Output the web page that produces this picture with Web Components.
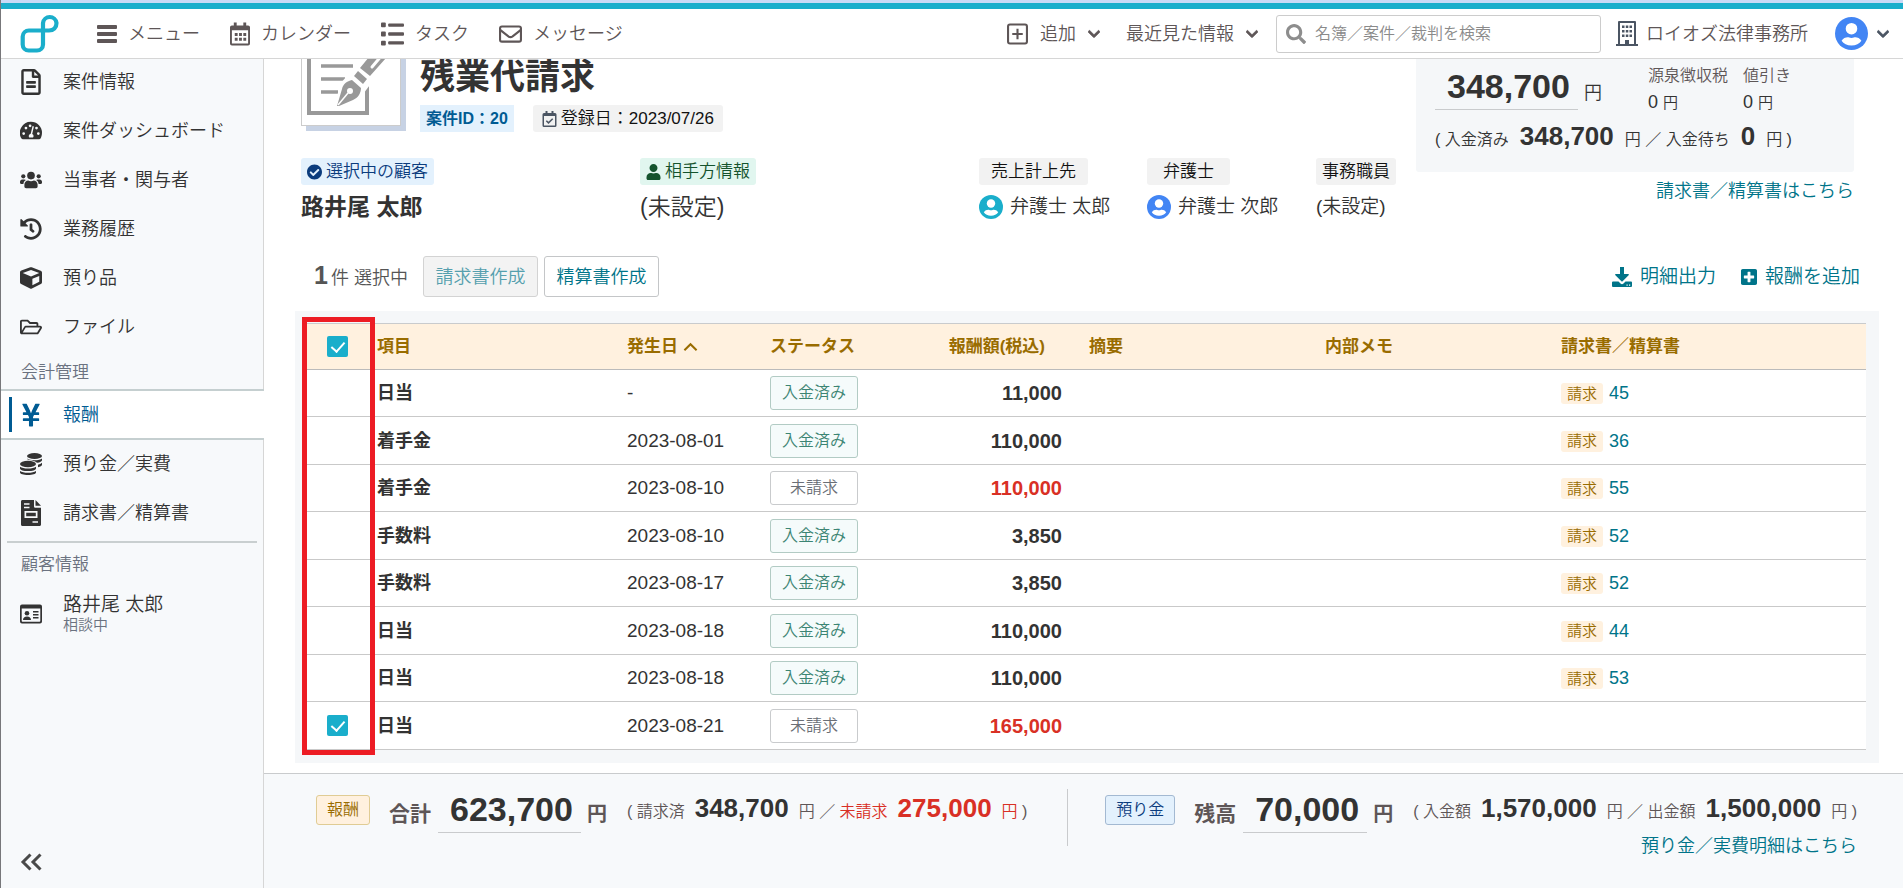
<!DOCTYPE html>
<html lang="ja">
<head>
<meta charset="utf-8">
<title>報酬 - 残業代請求</title>
<style>
:root {
  --teal: #1aaecb; --link: #007489; --ink: #333; --soft: #5e5657; --muted: #6b7280;
  --line: #c9cbcd; --panel: #f7f9fb; --amber: #996c00; --amber-bg: #fff1df; --red: #d93025;
}
body { margin: 0; color: var(--ink); font: 350 18px/24px "Liberation Sans", "Noto Sans CJK JP", sans-serif; }
</style>
</head>
<body>
<app-shell></app-shell>
<script>
const ICONS = {
  bars: ['0 0 20 20', '<rect y="1" width="20" height="4" rx="1"/><rect y="8" width="20" height="4" rx="1"/><rect y="15" width="20" height="4" rx="1"/>'],
  calendar: ['0 0 21 24', '<path fill-rule="evenodd" d="M4 0h3v3h7V0h3v3h2a2 2 0 0 1 2 2v17a2 2 0 0 1-2 2H2a2 2 0 0 1-2-2V5a2 2 0 0 1 2-2h2zM2 8v14h17V8z"/><path d="M5 11h3v3H5zm4.500 0h3v3h-3zm4.500 0h3v3h-3zM5 16h3v3H5zm4.500 0h3v3h-3zm4.500 0h3v3h-3z"/>'],
  list: ['0 0 24 24', '<rect width="5" height="5" rx="1"/><rect y="9.500" width="5" height="5" rx="1"/><rect y="19" width="5" height="5" rx="1"/><rect x="7.500" y="1" width="16.500" height="3.500" rx="1"/><rect x="7.500" y="10.200" width="16.500" height="3.500" rx="1"/><rect x="7.500" y="19.500" width="16.500" height="3.500" rx="1"/>'],
  mail: ['0 0 24 18', '<g fill="none" stroke="currentColor" stroke-width="2.200"><rect x="1.100" y="1.100" width="21.800" height="15.800" rx="2"/><path d="M1.500 5l8.300 6.500q2.200 1.600 4.400 0L22.500 5"/></g>'],
  plusbox: ['0 0 22 22', '<g fill="none" stroke="currentColor" stroke-width="2.200"><rect x="1.100" y="1.100" width="19.800" height="19.800" rx="2"/><path d="M11 5.500v11M5.500 11h11"/></g>'],
  plus: ['0 32 448 448', '<path d="M400 32H48C21.500 32 0 53.500 0 80v352c0 26.500 21.500 48 48 48h352c26.500 0 48-21.500 48-48V80c0-26.500-21.500-48-48-48zm-32 252c0 6.600-5.400 12-12 12h-92v92c0 6.600-5.400 12-12 12h-56c-6.600 0-12-5.400-12-12v-92H92c-6.600 0-12-5.400-12-12v-56c0-6.600 5.400-12 12-12h92v-92c0-6.600 5.400-12 12-12h56c6.600 0 12 5.400 12 12v92h92c6.600 0 12 5.400 12 12v56z"/>'],
  chevron: ['0 0 448 512', '<path d="M207.029 381.476L12.686 187.132c-9.373-9.373-9.373-24.569 0-33.941l22.667-22.667c9.357-9.357 24.522-9.375 33.901-.04L224 284.505l154.745-154.021c9.379-9.335 24.544-9.317 33.901.04l22.667 22.667c9.373 9.373 9.373 24.569 0 33.941L240.971 381.476c-9.373 9.372-24.569 9.372-33.942 0z" stroke="currentColor" stroke-width="30"/>'],
  search: ['0 0 512 512', '<path d="M505 442.700L405.300 343c-4.500-4.500-10.600-7-17-7H372c27.600-35.300 44-79.700 44-128C416 93.100 322.900 0 208 0S0 93.100 0 208s93.100 208 208 208c48.300 0 92.700-16.400 128-44v16.300c0 6.400 2.500 12.500 7 17l99.700 99.700c9.400 9.400 24.600 9.400 33.900 0l28.300-28.300c9.400-9.400 9.400-24.600.1-34zM208 336c-70.700 0-128-57.200-128-128 0-70.700 57.200-128 128-128 70.700 0 128 57.200 128 128 0 70.700-57.200 128-128 128z"/>'],
  building: ['0 0 22 25', '<path fill-rule="evenodd" d="M3 0h16a1 1 0 0 1 1 1v22h2v2H0v-2h2V1a1 1 0 0 1 1-1zm1 2v21h5v-4h4v4h5V2z"/><path d="M6 4.500h2.500V7H6zm3.800 0h2.500V7H9.800zm3.700 0H16V7h-2.500zM6 9h2.500v2.500H6zm3.800 0h2.500v2.500H9.800zm3.700 0H16v2.500h-2.500zM6 13.500h2.500V16H6zm3.800 0h2.500V16H9.800zm3.700 0H16V16h-2.500z"/>'],
  avatar: ['0 0 24 24', '<circle cx="12" cy="12" r="12"/><circle cx="12" cy="8.500" r="4.200" fill="#fff"/><path fill="#fff" d="M4.800 17.300c1-1.700 2.900-2.500 4.400-2.500.8 0 1.400.5 2.800.5s2-.5 2.800-.5c1.500 0 3.400.8 4.400 2.500-1.400 2.200-4 3.500-7.200 3.500s-5.800-1.300-7.200-3.500z"/>'],
  file: ['0 0 384 512', '<path d="M288 248v28c0 6.600-5.400 12-12 12H108c-6.600 0-12-5.400-12-12v-28c0-6.600 5.400-12 12-12h168c6.600 0 12 5.400 12 12zm-12 72H108c-6.600 0-12 5.400-12 12v28c0 6.600 5.400 12 12 12h168c6.600 0 12-5.400 12-12v-28c0-6.600-5.400-12-12-12zm108-188.100V464c0 26.500-21.500 48-48 48H48c-26.500 0-48-21.500-48-48V48C0 21.500 21.500 0 48 0h204.100C264.800 0 277 5.100 286 14.100L369.900 98c9 8.900 14.100 21.200 14.100 33.900zm-128-80V128h76.100L256 51.900zM336 464V176H232c-13.300 0-24-10.700-24-24V48H48v416h288z"/>'],
  gauge: ['0 0 24 20', '<path fill-rule="evenodd" d="M12 0a12 12 0 0 1 12 12c0 2.300-.6 4.500-1.600 6.300-.4.600-.9.700-1.500.7H3.100c-.6 0-1.100-.1-1.500-.7A12 12 0 0 1 12 0zM4 11.300a1.500 1.500 0 1 0 0 3 1.500 1.500 0 0 0 0-3zm2.500-6a1.500 1.500 0 1 0 0 3 1.500 1.500 0 0 0 0-3zm4.500-2.500a1.500 1.500 0 1 0 0 3 1.500 1.500 0 0 0 0-3zm7 2.500a1.500 1.500 0 1 0 0 3 1.500 1.500 0 0 0 0-3zm2 6a1.500 1.500 0 1 0 0 3 1.500 1.500 0 0 0 0-3zM13.700 4.500l-2 8.500a2.600 2.600 0 0 0-1.700 4h4.200a2.600 2.600 0 0 0-.9-3.700l1.900-8.300z"/>'],
  users: ['0 0 24 18', '<circle cx="3.600" cy="5" r="2.300"/><circle cx="20.400" cy="5" r="2.300"/><circle cx="12" cy="4.200" r="4.200"/><path d="M2.400 8.500h2.400c.6 0 1.200.2 1.600.6-1.500.9-2.500 2.400-2.700 4.200H1.200C.5 13.300 0 12.800 0 12.100V11c0-1.400 1.100-2.500 2.400-2.500zm19.200 0h-2.400c-.6 0-1.200.2-1.600.6 1.500.9 2.500 2.400 2.700 4.200h2.500c.7 0 1.200-.5 1.200-1.200V11c0-1.400-1.100-2.500-2.400-2.500zM9 9.600c1.900.9 4.100.9 6 0 2.400 0 4.200 1.900 4.200 4.300v2.300c0 1-.8 1.800-1.800 1.800H6.600c-1 0-1.800-.8-1.800-1.800v-2.300c0-2.400 1.900-4.300 4.200-4.300z"/>'],
  history: ['0 0 512 512', '<path d="M504 255.531c.253 136.640-111.180 248.372-247.820 248.468-59.015.042-113.223-20.530-155.822-54.911-11.077-8.940-11.905-25.541-1.839-35.607l11.267-11.267c8.609-8.609 22.353-9.551 31.891-1.984C173.062 425.135 212.781 440 256 440c101.705 0 184-82.311 184-184 0-101.705-82.311-184-184-184-48.814 0-93.149 18.969-126.068 49.932l50.754 50.754c10.080 10.080 2.941 27.314-11.313 27.314H24c-8.837 0-16-7.163-16-16V38.627c0-14.254 17.234-21.393 27.314-11.314l49.372 49.372C129.209 34.136 189.552 8 256 8c136.810 0 247.747 110.780 248 247.531zm-180.912 78.784l9.823-12.630c8.138-10.463 6.253-25.542-4.210-33.679L288 256.349V152c0-13.255-10.745-24-24-24h-16c-13.255 0-24 10.745-24 24v135.651l65.409 50.874c10.463 8.137 25.541 6.253 33.679-4.210z"/>'],
  cube: ['0 0 512 512', '<path d="M239.100 6.300l-208 78c-18.700 7-31.100 25-31.100 45v225.100c0 18.200 10.300 34.800 26.500 42.900l208 104c13.500 6.800 29.400 6.800 42.900 0l208-104c16.300-8.100 26.500-24.800 26.500-42.900V129.300c0-20-12.400-37.900-31.100-44.900l-208-78C262 2.200 250 2.200 239.100 6.300zM256 68.400l192 72v1.100l-192 78-192-78v-1.100l192-72zm32 356V275.500l160-65v133.900l-160 80z"/>'],
  folder: ['0 0 576 512', '<path fill-rule="evenodd" d="M527.900 224H480v-48c0-26.500-21.500-48-48-48H272l-64-64H48C21.500 64 0 85.500 0 112v288c0 26.500 21.500 48 48 48h400c16.500 0 31.900-8.500 40.700-22.600l79.900-128c20-31.900-3-73.400-40.700-73.400zM48 118c0-3.300 2.700-6 6-6h134.100l64 64H426c3.300 0 6 2.700 6 6v42H152c-16.800 0-32.400 8.800-41.100 23.200L48 351.400zm400 282H72l77.200-128H528z"/>'],
  yen: ['0 0 384 512', '<path d="M351.200 32h-65.300c-4.600 0-8.800 2.600-10.800 6.700l-55.400 113.200c-14.500 34.700-27.100 71.900-27.100 71.900h-1.300s-12.600-37.200-27.100-71.900L108.800 38.700c-2-4.100-6.200-6.700-10.800-6.700H32.800c-9.100 0-14.800 9.700-10.600 17.600L102.300 200H44c-6.600 0-12 5.400-12 12v32c0 6.600 5.400 12 12 12h88.200l19.800 37.200V320H44c-6.600 0-12 5.400-12 12v32c0 6.600 5.400 12 12 12h108v92c0 6.600 5.400 12 12 12h56c6.600 0 12-5.400 12-12v-92h108c6.600 0 12-5.400 12-12v-32c0-6.600-5.400-12-12-12H232v-26.800l19.800-37.200H340c6.600 0 12-5.400 12-12v-32c0-6.600-5.400-12-12-12h-58.300l80.100-150.400c4.300-7.900-1.500-17.600-10.600-17.600z"/>'],
  coins: ['0 0 22 22', '<ellipse cx="14.500" cy="3" rx="7.500" ry="3"/><path d="M7 5.500c1.500 1.100 4 1.700 7.500 1.700S20.800 6.500 22 5.400v1.800c0 1.200-2 2.200-5 2.600-1.400-1.500-4.500-2.600-8-2.900C7.700 6.600 7 6.100 7 5.500zm15 4.300v1.900c0 1.100-1.700 2-4 2.500v-2.500c1.700-.4 3.100-1 4-1.900z"/><ellipse cx="8" cy="11" rx="8" ry="3.200"/><path d="M0 13.700c1.700 1.200 4.400 1.800 8 1.800s6.300-.6 8-1.800v1.700c0 1.600-3.500 2.700-8 2.700s-8-1.100-8-2.700zm0 4.200c1.700 1.200 4.400 1.800 8 1.800s6.300-.6 8-1.800v1.600c0 1.500-3.500 2.500-8 2.500s-8-1-8-2.500z"/>'],
  invoice: ['0 0 20 26', '<path fill-rule="evenodd" d="M1.500 0H13v6.500c0 .8.400 1.200 1.200 1.200H20V24.500c0 .9-.6 1.500-1.500 1.500h-17C.6 26 0 25.400 0 24.500v-23C0 .6.600 0 1.500 0zM3 3.300v1.400h5.500V3.300zm0 3.500v1.400h5.500V6.800zM3.500 11v7h13v-7zm1.700 1.800h9.600v3.500H5.200zM11.500 21.300v1.500H17v-1.500z"/><path d="M14.500 0L20 5.800h-5.500z"/>'],
  card: ['0 0 22 19', '<path fill-rule="evenodd" d="M2 0h18a2 2 0 0 1 2 2v15a2 2 0 0 1-2 2H2a2 2 0 0 1-2-2V2a2 2 0 0 1 2-2zm-.3 4v12.300c0 .5.300.9.800.9h17c.5 0 .8-.4.8-.9V4z"/><circle cx="7" cy="8.800" r="2.300"/><path d="M3 15.500c0-2 1.500-3.500 4-3.500s4 1.500 4 3.500zM13 6.500h5.500V8H13zm0 3h5.500V11H13zm0 3h5.500V14H13z"/>'],
  download: ['0 0 20 20', '<path d="M8 0h4v7h4.200c.6 0 .9.700.4 1.200l-6 6a.8.800 0 0 1-1.200 0l-6-6C2.900 7.700 3.200 7 3.800 7H8z"/><path fill-rule="evenodd" d="M1 14.500h5.500l2 2a2.100 2.100 0 0 0 3 0l2-2H19a1 1 0 0 1 1 1V19a1 1 0 0 1-1 1H1a1 1 0 0 1-1-1v-3.500a1 1 0 0 1 1-1zm13.500 3v1.200h1.200v-1.200zm2.500 0v1.200h1.200v-1.200z"/>'],
  check: ['8 8 496 496', '<path d="M504 256c0 136.967-111.033 248-248 248S8 392.967 8 256 119.033 8 256 8s248 111.033 248 248zM227.314 387.314l184-184c6.248-6.248 6.248-16.379 0-22.627l-22.627-22.627c-6.248-6.249-16.379-6.249-22.628 0L216 308.118l-70.059-70.059c-6.248-6.248-16.379-6.248-22.628 0l-22.627 22.627c-6.248 6.248-6.248 16.379 0 22.627l104 104c6.249 6.249 16.379 6.249 22.628.001z"/>'],
  user: ['0 0 448 512', '<path d="M224 256c70.700 0 128-57.300 128-128S294.700 0 224 0 96 57.300 96 128s57.300 128 128 128zm89.600 32h-16.700c-22.200 10.200-46.900 16-72.900 16s-50.600-5.800-72.900-16h-16.700C60.200 288 0 348.200 0 422.400V464c0 26.500 21.500 48 48 48h352c26.500 0 48-21.500 48-48v-41.600c0-74.200-60.200-134.400-134.400-134.400z"/>'],
  calcheck: ['0 0 14 16', '<path fill-rule="evenodd" d="M3 0h2v2h4V0h2v2h1.500A1.500 1.500 0 0 1 14 3.500v11a1.500 1.500 0 0 1-1.500 1.500h-11A1.500 1.500 0 0 1 0 14.500v-11A1.500 1.500 0 0 1 1.500 2H3zM1.500 5v9.500h11V5z"/><path fill="none" stroke="currentColor" stroke-width="1.500" d="M3.800 9.700l2.200 2.200 4.200-4.200"/>'],
  caret: ['0 0 16 10', '<path fill="none" stroke="currentColor" stroke-width="2.200" d="M1.500 8.500L8 2l6.500 6.500"/>'],
  collapse: ['0 0 22 18', '<path fill="none" stroke="currentColor" stroke-width="3" d="M10.500 1.500L3 9l7.500 7.500M20.500 1.500L13 9l7.500 7.500"/>'],
  logo: ['0 0 38 39', '<path fill="none" stroke="#1aaecb" stroke-width="4.200" stroke-linejoin="round" d="M22.500 16.500V9a6.800 6.800 0 0 1 13.500 0c0 4.800-3 7.500-7.500 7.500H8.500A6.200 6.200 0 0 0 2.200 22.500v8a6 6 0 0 0 6 6h8.300a6 6 0 0 0 6-6z"/>'],
  contract: ['0 0 92 92', '<g fill="none" stroke="#999"><path stroke-width="4" d="M62 52v31H4V4h58v14"/><path stroke-width="3.500" d="M16 36h32M16 49h24M16 62h17"/></g><path fill="#fff" d="M90 22L52 72l-23 8 6-26 36-42z"/><path fill="#999" d="M32 76l5-17c1-5 5-8 10-9l9 8c0 5-3 10-8 12l-14 6zM49 46l4-5 9 8-4 5zM55 38l23-28c8-6 16 2 11 9L65 46z"/><path stroke="#fff" stroke-width="3" stroke-linecap="round" d="M67 37l16-19"/><path stroke="#fff" stroke-width="1.500" d="M33 75l10-12"/><circle cx="45" cy="61" r="3" fill="#fff"/>']
};

const define = (name, css, html) => {
  const tpl = document.createElement('template');
  tpl.innerHTML = `<style>*{box-sizing:border-box}a{color:inherit;text-decoration:none}b{font-weight:700}button{font:inherit;color:inherit;background:none;border:0;padding:0}${css}</style>${html}`;
  customElements.define(name, class extends HTMLElement {
    constructor() {
      super();
      this.attachShadow({ mode: 'open' }).append(tpl.content.cloneNode(true));
    }
  });
};

customElements.define('app-icon', class extends HTMLElement {
  connectedCallback() {
    if (this.shadowRoot) return;
    const [box, body] = ICONS[this.getAttribute('name')];
    this.attachShadow({ mode: 'open' }).innerHTML =
      `<style>:host{display:inline-flex;flex:none;width:20px;height:20px}svg{width:100%;height:100%}</style>
       <svg viewBox="${box}" fill="currentColor" aria-hidden="true">${body}</svg>`;
  }
});

define('text-badge', `
:host{display:inline-flex;align-items:center;justify-content:center;gap:4px;height:27px;padding:0 6px;border-radius:3px;font-size:17px;line-height:24px;background:#f2f2f2;color:#111;white-space:nowrap}
:host([tone=blue]){background:#e3f1fd;color:#0b3c7d}
:host([tone=id]){background:#e3f1fd;color:#005b93;font-size:16px;font-weight:700;border-radius:0}
:host([tone=green]){background:#e1f6ef;color:#14532d}
:host([tone=amber]){background:var(--amber-bg);color:var(--amber);height:21px;font-size:15px;line-height:20px}
:host([tone=fee]){background:var(--amber-bg);color:var(--amber);border:1px solid #e0cc94;height:30px;font-size:16px;padding:0 10px}
:host([tone=deposit]){background:#e3f1fd;color:#0b3c7d;border:1px solid #a3b9d2;height:30px;font-size:16px;padding:0 10px}
`, `<slot name="icon"></slot><span><slot></slot></span>`);

define('status-tag', `
:host{display:flex;align-items:center;justify-content:center;width:88px;height:34px;border:1px solid #c9cbcd;border-radius:3px;font-size:16px;color:#6b6f76;background:#fff}
:host([paid]){border-color:#b2cbc4;background:#f5fbfb;color:#3c8573}
`, `<slot></slot>`);

define('money-figure', `
:host{display:inline-block;font-size:34px;line-height:40px;font-weight:700;color:#333;padding:0 8px 3px 12px;border-bottom:1px solid var(--line)}
`, `<slot></slot>`);

define('app-header', `
:host{display:block;border-top:3px solid #c9daf6}
header{display:flex;align-items:center;height:56px;border-top:6px solid var(--teal);border-bottom:1px solid #d6d6d6;background:#fff;color:var(--soft);padding:0 14px 0 19px}
nav,.right{display:flex;align-items:center}
nav{margin-left:38px;gap:30px}
a,.menu{display:flex;align-items:center;gap:11px;white-space:nowrap}
.right{margin-left:auto}
.menu{gap:12px}
.search{display:flex;align-items:center;gap:9px;width:325px;height:38px;border:1px solid #ccc;border-radius:3px;padding:0 9px;margin:0 15px 0 18px;color:#8d8d8d}
input{flex:1;min-width:0;border:0;outline:0;background:none;padding:0;font:inherit;font-size:16px;color:#333}
input::placeholder{color:#8a8a8a;opacity:1}
.c{width:12px;height:14px}
.office{gap:8px}
`, `<header>
<a href="#" aria-label="ホーム"><app-icon name="logo" style="width:39px;height:39px"></app-icon></a>
<nav><a href="#"><app-icon name="bars"></app-icon>メニュー</a>
<a href="#"><app-icon name="calendar" style="height:24px"></app-icon>カレンダー</a>
<a href="#"><app-icon name="list" style="width:23px;height:24px"></app-icon>タスク</a>
<a href="#"><app-icon name="mail" style="width:23px"></app-icon>メッセージ</a></nav>
<div class="right">
<button class="menu"><app-icon name="plusbox" style="width:21px;height:22px"></app-icon>追加<app-icon class="c" name="chevron"></app-icon></button>
<button class="menu" style="margin-left:26px">最近見た情報<app-icon class="c" name="chevron"></app-icon></button>
<label class="search"><app-icon name="search"></app-icon><input type="search" aria-label="検索" placeholder="名簿／案件／裁判を検索"></label>
<a class="office" href="#"><app-icon name="building" style="width:22px;height:25px;color:#4b5563"></app-icon>ロイオズ法律事務所</a>
<button class="menu" style="margin-left:27px;gap:9px" aria-label="アカウント"><app-icon name="avatar" style="width:33px;height:33px;color:#4285f4"></app-icon><app-icon class="c" name="chevron" style="color:#4b5563"></app-icon></button>
</div></header>`);

define('nav-item', `
:host{display:block}
a{display:flex;align-items:center;gap:21px;height:49px;padding-left:19px}
:host([active]){margin-bottom:-1px}
:host([active]) a{position:relative;background:#fff;color:#005b93;height:51px;margin-right:-1px;border:solid #c5cfd0;border-width:2px 0}
:host([active]) a::before{content:"";position:absolute;left:8px;top:6px;bottom:6px;width:3px;background:#005b93}
`, `<a href="#"><slot name="icon"></slot><slot></slot></a>`);

define('side-nav', `
:host{display:flex;flex-direction:column;background:var(--panel);border-right:1px solid #d6d6d6;padding:0 0 15px}
nav{margin-top:-2px}
h2{font:inherit;font-size:17px;color:var(--muted);margin:0;padding:10px 20px 4px}
h2.client{padding-bottom:12px}
app-icon{width:22px;height:22px}
.big{height:26px}
.group{border-bottom:2px solid #c9cfd0;margin:0 6px;height:6px}
.person{display:grid;font-size:19px;line-height:22px;padding-left:0}
.person small{font-size:15px;line-height:18px;color:var(--muted)}
button{margin:auto auto 0 19px;display:flex;color:#4a4a4a}
`, `<nav>
<nav-item><app-icon slot="icon" name="file" class="big"></app-icon>案件情報</nav-item>
<nav-item><app-icon slot="icon" name="gauge"></app-icon>案件ダッシュボード</nav-item>
<nav-item><app-icon slot="icon" name="users"></app-icon>当事者・関与者</nav-item>
<nav-item><app-icon slot="icon" name="history"></app-icon>業務履歴</nav-item>
<nav-item><app-icon slot="icon" name="cube"></app-icon>預り品</nav-item>
<nav-item><app-icon slot="icon" name="folder"></app-icon>ファイル</nav-item>
<h2>会計管理</h2>
<nav-item active><app-icon slot="icon" name="yen" class="big"></app-icon>報酬</nav-item>
<nav-item><app-icon slot="icon" name="coins"></app-icon>預り金／実費</nav-item>
<nav-item><app-icon slot="icon" name="invoice" class="big"></app-icon>請求書／精算書</nav-item>
<div class="group"></div>
<h2 class="client">顧客情報</h2>
<nav-item><app-icon slot="icon" name="card"></app-icon><span class="person">路井尾 太郎<small>相談中</small></span></nav-item>
</nav>
<button aria-label="サイドバーを閉じる"><app-icon name="collapse"></app-icon></button>`);

define('case-head', `
:host{display:flex}
.title{display:flex;gap:19px;height:73px;align-items:flex-end}
.thumb{display:flex;width:100px;height:100px;margin:0 0 6px;border:1px solid #ccc;background:#fff;box-shadow:5px 5px 0 #c7d2e4;align-items:center;justify-content:center}
.title>div{align-self:flex-start}
h1{font-size:35px;line-height:36px;font-weight:700;margin:0 0 10px;white-space:nowrap}
.tags{display:flex;gap:19px}
.tags text-badge:last-child{padding:0 9px}
`, `<div class="title"><span class="thumb"><app-icon name="contract" style="width:92px;height:92px"></app-icon></span>
<div><h1>残業代請求</h1><div class="tags"><text-badge tone="id">案件ID：20</text-badge>
<text-badge><app-icon slot="icon" name="calcheck" style="width:15px;height:16px;color:#4b5563"></app-icon>登録日：2023/07/26</text-badge></div></div></div>`);

define('people-row', `
:host{display:grid;grid-template-columns:339fr 339fr 168fr 169fr 100fr;margin-top:26px;white-space:nowrap}
div{display:flex;flex-direction:column;align-items:flex-start;gap:8px}
p{display:flex;align-items:center;gap:7px;margin:0;font-size:19px;height:28px;line-height:28px}
.lg{font-size:23px}
app-icon{width:24px;height:24px}
text-badge app-icon{width:15px;height:16px}
`, `<div><text-badge tone="blue"><app-icon slot="icon" name="check"></app-icon>選択中の顧客</text-badge><p class="lg"><b>路井尾 太郎</b></p></div>
<div><text-badge tone="green"><app-icon slot="icon" name="user"></app-icon>相手方情報</text-badge><p class="lg">(未設定)</p></div>
<div><text-badge style="padding:0 12px">売上計上先</text-badge><p><app-icon name="avatar" style="color:#1aaecb"></app-icon>弁護士 太郎</p></div>
<div><text-badge style="padding:0 16px">弁護士</text-badge><p><app-icon name="avatar" style="color:#4285f4"></app-icon>弁護士 次郎</p></div>
<div><text-badge>事務職員</text-badge><p>(未設定)</p></div>`);

define('fee-summary', `
:host{display:block;width:438px}
.box{background:#f5f7f9;border-radius:0 0 3px 3px;height:113px;padding:7px 19px 0}
.top{display:flex;align-items:flex-start;height:54px}
.yen{margin:15px 46px 0 6px}
dl{margin:-2px 15px 0 0;font-size:16px}
dt{color:var(--soft);font-size:16px}
dd{margin:2px 0 0;font-size:18px}
dd small{font-size:15px}
p{margin:0;display:flex;align-items:baseline;gap:11px;font-size:16px;line-height:32px;white-space:nowrap}
b{font-size:26px}
a{display:block;text-align:right;color:var(--link);padding-top:7px}
`, `<div class="box"><div class="top"><money-figure>348,700</money-figure><span class="yen">円</span>
<dl><dt>源泉徴収税</dt><dd>0 <small>円</small></dd></dl><dl><dt>値引き</dt><dd>0 <small>円</small></dd></dl></div>
<p><span>( 入金済み</span><b>348,700</b><span>円 ／ 入金待ち</span><b>0</b><span>円 )</span></p></div>
<a href="#">請求書／精算書はこちら</a>`);

define('fee-toolbar', `
:host{display:flex;align-items:center;margin:35px 43px 14px 50px;white-space:nowrap}
.count{color:#555;margin-right:15px}
.count b{font-size:25px;margin-right:3px}
button{width:115px;height:41px;border:1px solid #c4c6c8;border-radius:3px;background:#fff;color:var(--link);margin-right:6px}
button:disabled{background:#f3f3f3;color:#559fae;border-color:#d3d3d3}
a{display:flex;align-items:center;gap:8px;color:var(--link);font-size:19px;margin-left:25px}
a:first-of-type{margin-left:auto}
`, `<span class="count"><b>1</b>件 選択中</span><button disabled>請求書作成</button><button>精算書作成</button>
<a href="#"><app-icon name="download"></app-icon>明細出力</a><a href="#"><app-icon name="plus" style="width:16px;height:16px"></app-icon>報酬を追加</a>`);

const ROWS = [
  ['日当', '-', 1, '11,000', 45], ['着手金', '2023-08-01', 1, '110,000', 36],
  ['着手金', '2023-08-10', 0, '110,000', 55], ['手数料', '2023-08-10', 1, '3,850', 52],
  ['手数料', '2023-08-17', 1, '3,850', 52], ['日当', '2023-08-18', 1, '110,000', 44],
  ['日当', '2023-08-18', 1, '110,000', 53], ['日当', '2023-08-21', 0, '165,000', 0]
];

define('fee-table', `
:host{display:block;position:relative;margin:0 24px 10px 31px;padding:12px 13px 13px 12px;background:#f5f7f9}
table{width:100%;table-layout:fixed;border-spacing:0;background:#fff}
th,td{padding:0;text-align:left;border-bottom:1px solid #c9c9c9;white-space:nowrap}
th{height:47px;background:var(--amber-bg);color:var(--amber);font-size:17px;font-weight:700;border-top:1px solid #c9cbcd;border-bottom-color:#bbb}
td{height:47px}
tr:nth-child(even) td{height:48px}
.pick{width:70px;padding-left:20px}
.item{width:250px}.date{width:143px}.state{width:130px}.sum{width:189px}.doc{width:305px}
td:nth-child(2){font-weight:700}
td.date{font-size:19px}
.sum{text-align:right;padding-right:27px}
th.sum{padding-right:44px}
td.sum{font-size:20px;font-weight:700}
.due{color:var(--red)}
.doc text-badge{margin-right:6px;vertical-align:middle}
.doc a{color:var(--link);vertical-align:middle}
input{appearance:none;display:block;width:21px;height:21px;margin:0;border-radius:2px;background:var(--teal);position:relative}
input::after{content:"";position:absolute;left:7px;top:3px;width:6px;height:11px;border:solid #fff;border-width:0 2px 2px 0;transform:rotate(42deg)}
.mark{position:absolute;inset:6px auto 8px 7px;width:73px;border:5px solid #ed1c24;pointer-events:none}
`, `<table><thead><tr><th class="pick"><input type="checkbox" checked aria-label="すべて選択"></th><th class="item">項目</th>
<th class="date">発生日 <app-icon name="caret" style="width:15px;height:10px"></app-icon></th><th class="state">ステータス</th><th class="sum">報酬額(税込)</th><th>摘要</th><th>内部メモ</th><th class="doc">請求書／精算書</th></tr></thead>
<tbody>${ROWS.map(([item, date, paid, sum, doc]) => `<tr><td class="pick">${doc ? '' : '<input type="checkbox" checked aria-label="選択">'}</td><td>${item}</td><td class="date">${date}</td>
<td><status-tag${paid ? ' paid' : ''}>${paid ? '入金済み' : '未請求'}</status-tag></td><td class="sum${paid ? '' : ' due'}">${sum}</td><td></td><td></td>
<td class="doc">${doc ? `<text-badge tone="amber">請求</text-badge><a href="#">${doc}</a>` : ''}</td></tr>`).join('')}</tbody></table><div class="mark"></div>`);

define('totals-bar', `
:host{display:flex;border-top:1px solid var(--line);background:var(--panel);color:var(--soft);padding:15px 46px 0 52px;height:115px;white-space:nowrap}
section{display:flex;align-items:baseline}
.fee{width:752px;flex:none;border-right:1px solid var(--line);height:57px}
.dep{margin-left:auto}
h3{font-size:21px;font-weight:700;margin:0 7px 0 19px}
.unit{font-size:20px;font-weight:700;margin:0 20px 0 6px}
p{display:flex;align-items:baseline;align-self:flex-start;gap:10px;margin:0;font-size:16px;line-height:38px}
p b{font-size:26px;color:#333}
.due,p .due{color:var(--red)}
a{display:block;text-align:right;color:var(--link);margin-top:1px}
text-badge{align-self:flex-start;margin-top:6px}
`, `<section class="fee"><text-badge tone="fee">報酬</text-badge><h3>合計</h3><money-figure>623,700</money-figure><span class="unit">円</span>
<p><span>( 請求済</span><b>348,700</b><span>円 ／ <span class="due">未請求</span></span><b class="due">275,000</b><span><span class="due">円</span> )</span></p></section>
<div class="dep"><section><text-badge tone="deposit">預り金</text-badge><h3>残高</h3><money-figure>70,000</money-figure><span class="unit">円</span>
<p><span>( 入金額</span><b>1,570,000</b><span>円 ／ 出金額</span><b>1,500,000</b><span>円 )</span></p></section><a href="#">預り金／実費明細はこちら</a></div>`);

define('app-shell', `
:host{display:grid;grid-template:auto 1fr / 263px 1fr;min-height:100vh;border-left:1px solid #77777a}
app-header{grid-column:1/-1;position:relative;z-index:1}
main{display:flex;flex-direction:column;min-width:0;background:#fff}
.top{display:flex;padding:0 49px 0 37px}
.left{flex:1;min-width:0}
totals-bar{flex:1}
`, `<app-header></app-header><side-nav></side-nav>
<main><div class="top"><div class="left"><case-head></case-head><people-row></people-row></div><fee-summary></fee-summary></div>
<fee-toolbar></fee-toolbar><fee-table></fee-table><totals-bar></totals-bar></main>`);
</script>
</body>
</html>
